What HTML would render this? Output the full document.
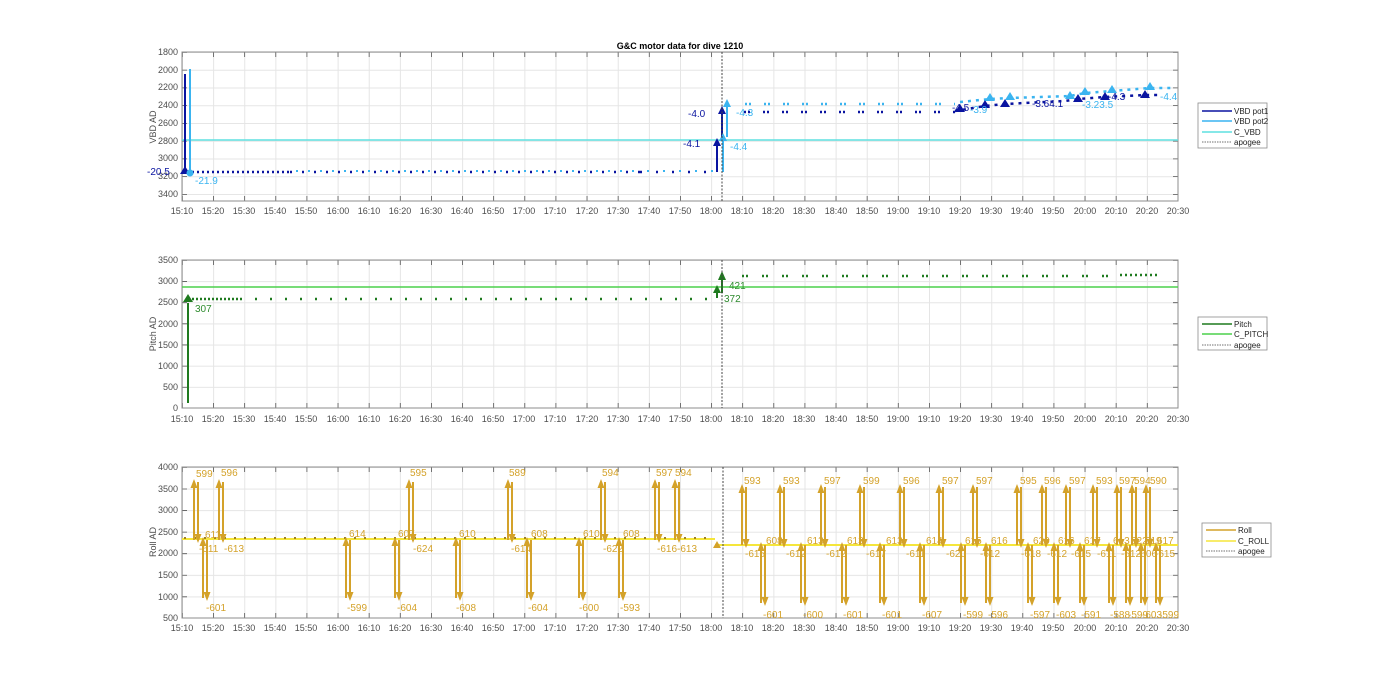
<!DOCTYPE html>
<html><head><meta charset="utf-8"><style>
html,body{margin:0;padding:0;background:#fff}
svg{display:block;font-family:"Liberation Sans",Arial,sans-serif}
.t{font-size:9px;fill:#4d4d4d}
.ty{font-size:9px;fill:#4d4d4d;text-anchor:end}
.tx{font-size:9px;fill:#4d4d4d;text-anchor:middle}
.r{font-size:10px;fill:#d4a22a}
.lg{font-size:8px;fill:#222}
</style></head><body>
<svg width="1400" height="693" viewBox="0 0 1400 693" xmlns="http://www.w3.org/2000/svg">
<defs>
<pattern id="gx" patternUnits="userSpaceOnUse" x="182" y="0" width="31.125" height="10"><line x1="0.5" y1="0" x2="0.5" y2="10" stroke="#e5e5e5" stroke-width="1"/></pattern>
<pattern id="gy1" patternUnits="userSpaceOnUse" x="0" y="52" width="10" height="17.75"><line x1="0" y1="0.5" x2="10" y2="0.5" stroke="#e5e5e5" stroke-width="1"/></pattern>
<pattern id="gy2" patternUnits="userSpaceOnUse" x="0" y="260" width="10" height="21.14"><line x1="0" y1="0.5" x2="10" y2="0.5" stroke="#e5e5e5" stroke-width="1"/></pattern>
<pattern id="gy3" patternUnits="userSpaceOnUse" x="0" y="467" width="10" height="21.57"><line x1="0" y1="0.5" x2="10" y2="0.5" stroke="#e5e5e5" stroke-width="1"/></pattern>
<g id="u" stroke="#d4a22a" stroke-width="2" fill="#d4a22a">
<line x1="0" y1="0" x2="0" y2="-53"/><polygon points="-3.5,-52 3.5,-52 0,-61" stroke="none"/>
<line x1="4" y1="-58" x2="4" y2="-5"/><polygon points="0.5,-6 7.5,-6 4,3" stroke="none"/>
</g>
<g id="d" stroke="#d4a22a" stroke-width="2" fill="#d4a22a">
<line x1="4" y1="0" x2="4" y2="53"/><polygon points="0.5,52 7.5,52 4,61" stroke="none"/>
<line x1="0" y1="58" x2="0" y2="5"/><polygon points="-3.5,6 3.5,6 0,-3" stroke="none"/>
</g>
<g id="ud" stroke="#d4a22a" stroke-width="2" fill="#d4a22a">
<line x1="0" y1="0" x2="0" y2="-53"/><polygon points="-3.5,-52 3.5,-52 0,-61" stroke="none"/>
<line x1="4" y1="-58" x2="4" y2="-5"/><polygon points="0.5,-6 7.5,-6 4,3" stroke="none"/>
</g>
</defs>

<text x="680" y="49" text-anchor="middle" style="font-size:9px;font-weight:bold;fill:#000">G&amp;C motor data for dive 1210</text>

<!-- ===== PLOT 1 ===== -->
<rect x="182" y="52" width="996" height="149" fill="url(#gx)"/>
<rect x="182" y="52" width="996" height="149" fill="url(#gy1)"/>
<line x1="182" y1="198.5" x2="1178" y2="198.5" stroke="#555" stroke-width="5" stroke-dasharray="0.8 30.325"/>
<line x1="182" y1="54.5" x2="1178" y2="54.5" stroke="#555" stroke-width="5" stroke-dasharray="0.8 30.325"/>
<line x1="1175.5" y1="52" x2="1175.5" y2="201" stroke="#555" stroke-width="5" stroke-dasharray="0.8 16.95"/>
<line x1="184.5" y1="52" x2="184.5" y2="201" stroke="#555" stroke-width="5" stroke-dasharray="0.8 16.95"/>
<rect x="182" y="52" width="996" height="149" fill="none" stroke="#8c8c8c" stroke-width="1"/>
<g class="ty">
<text x="178" y="55">1800</text><text x="178" y="73">2000</text><text x="178" y="90">2200</text><text x="178" y="108">2400</text><text x="178" y="126">2600</text><text x="178" y="144">2800</text><text x="178" y="161">3000</text><text x="178" y="179">3200</text><text x="178" y="197">3400</text>
</g>
<text transform="translate(156,127) rotate(-90)" text-anchor="middle" class="t">VBD AD</text>
<!-- C_VBD -->
<line x1="182" y1="140" x2="1178" y2="140" stroke="#5fe0e0" stroke-width="1.5"/>
<!-- dots before apogee -->
<line x1="192" y1="172" x2="290" y2="172" stroke="#0a14a0" stroke-width="2.5" stroke-dasharray="2 3"/>
<line x1="290" y1="172" x2="640" y2="172" stroke="#0a14a0" stroke-width="2.5" stroke-dasharray="2 10"/>
<line x1="296" y1="171" x2="640" y2="171" stroke="#3ab4f0" stroke-width="2" stroke-dasharray="2 10"/>
<line x1="640" y1="172" x2="715" y2="172" stroke="#0a14a0" stroke-width="2.5" stroke-dasharray="2 14"/>
<line x1="647" y1="171" x2="715" y2="171" stroke="#3ab4f0" stroke-width="2" stroke-dasharray="2 14"/>
<!-- initial arrows -->
<line x1="185" y1="172" x2="185" y2="74" stroke="#0a14a0" stroke-width="2"/>
<line x1="190" y1="172" x2="190" y2="69" stroke="#3ab4f0" stroke-width="2"/>
<polygon points="180,174 190,174 185,166" fill="#0a14a0"/>
<circle cx="190" cy="173" r="3.5" fill="#3ab4f0"/>
<text x="147" y="175" style="font-size:10px;fill:#0a14a0">-20.5</text>
<text x="195" y="184" style="font-size:10px;fill:#3ab4f0">-21.9</text>
<!-- apogee arrows -->
<line x1="717" y1="172" x2="717" y2="144" stroke="#0a14a0" stroke-width="2"/><polygon points="713,146 721,146 717,138" fill="#0a14a0"/>
<line x1="722" y1="137" x2="722" y2="112" stroke="#0a14a0" stroke-width="2"/><polygon points="718,114 726,114 722,106" fill="#0a14a0"/>
<line x1="723" y1="172" x2="723" y2="140" stroke="#3ab4f0" stroke-width="2"/><polygon points="719,141 727,141 723,133" fill="#3ab4f0"/>
<line x1="727" y1="137" x2="727" y2="106" stroke="#3ab4f0" stroke-width="2"/><polygon points="723,107 731,107 727,99" fill="#3ab4f0"/>
<text x="683" y="147" style="font-size:10px;fill:#0a14a0">-4.1</text>
<text x="688" y="117" style="font-size:10px;fill:#0a14a0">-4.0</text>
<text x="730" y="150" style="font-size:10px;fill:#3ab4f0">-4.4</text>
<text x="736" y="116" style="font-size:10px;fill:#3ab4f0">-4.3</text>
<!-- after apogee dots -->
<line x1="745" y1="104" x2="955" y2="104" stroke="#3ab4f0" stroke-width="2.5" stroke-dasharray="2 2 2 13"/>
<line x1="744" y1="112" x2="955" y2="112" stroke="#0a14a0" stroke-width="2.5" stroke-dasharray="2 2 2 13"/>
<polyline points="955,111 985,106 1005,104 1065,101 1078,99 1105,97 1145,95 1160,95" fill="none" stroke="#0a14a0" stroke-width="2.5" stroke-dasharray="3 5"/>
<polyline points="960,102 990,99 1010,98 1070,96 1085,93 1112,91 1150,88 1175,88" fill="none" stroke="#3ab4f0" stroke-width="2.5" stroke-dasharray="3 5"/>
<g fill="#0a14a0"><polygon points="955,112 965,112 960,104"/><polygon points="980,108 990,108 985,100"/><polygon points="1000,107 1010,107 1005,99"/><polygon points="1073,102 1083,102 1078,94"/><polygon points="1100,100 1110,100 1105,92"/><polygon points="1140,98 1150,98 1145,90"/></g>
<g fill="#3ab4f0"><polygon points="985,101 995,101 990,93"/><polygon points="1005,100 1015,100 1010,92"/><polygon points="1065,99 1075,99 1070,91"/><polygon points="1080,95 1090,95 1085,87"/><polygon points="1107,93 1117,93 1112,85"/><polygon points="1145,90 1155,90 1150,82"/></g>
<text x="952" y="111" style="font-size:10px;fill:#0a14a0">-4.5</text>
<text x="1032" y="107" style="font-size:10px;fill:#0a14a0">-3.64.1</text>
<text x="1108" y="100" style="font-size:10px;fill:#0a14a0">-4.3</text>
<text x="970" y="113" style="font-size:10px;fill:#3ab4f0">-3.9</text>
<text x="1082" y="108" style="font-size:10px;fill:#3ab4f0">-3.23.5</text>
<text x="1160" y="100" style="font-size:10px;fill:#3ab4f0">-4.4</text>
<line x1="722" y1="52" x2="722" y2="201" stroke="#444" stroke-width="1" stroke-dasharray="2 1.5"/>
<g class="tx">
<text x="182" y="214">15:10</text><text x="213" y="214">15:20</text><text x="244" y="214">15:30</text><text x="275" y="214">15:40</text><text x="306" y="214">15:50</text><text x="338" y="214">16:00</text><text x="369" y="214">16:10</text><text x="400" y="214">16:20</text><text x="431" y="214">16:30</text><text x="462" y="214">16:40</text><text x="493" y="214">16:50</text><text x="524" y="214">17:00</text><text x="555" y="214">17:10</text><text x="587" y="214">17:20</text><text x="618" y="214">17:30</text><text x="649" y="214">17:40</text><text x="680" y="214">17:50</text><text x="711" y="214">18:00</text><text x="742" y="214">18:10</text><text x="773" y="214">18:20</text><text x="804" y="214">18:30</text><text x="836" y="214">18:40</text><text x="867" y="214">18:50</text><text x="898" y="214">19:00</text><text x="929" y="214">19:10</text><text x="960" y="214">19:20</text><text x="991" y="214">19:30</text><text x="1022" y="214">19:40</text><text x="1053" y="214">19:50</text><text x="1085" y="214">20:00</text><text x="1116" y="214">20:10</text><text x="1147" y="214">20:20</text><text x="1178" y="214">20:30</text>
</g>
<!-- legend 1 -->
<rect x="1198" y="103" width="69" height="45" fill="#fff" stroke="#8c8c8c" stroke-width="0.8"/>
<line x1="1202" y1="111" x2="1232" y2="111" stroke="#0a14a0" stroke-width="1.5"/><text x="1234" y="114" class="lg">VBD pot1</text>
<line x1="1202" y1="121" x2="1232" y2="121" stroke="#3ab4f0" stroke-width="1.5"/><text x="1234" y="124" class="lg">VBD pot2</text>
<line x1="1202" y1="132" x2="1232" y2="132" stroke="#5fe0e0" stroke-width="1.5"/><text x="1234" y="135" class="lg">C_VBD</text>
<line x1="1202" y1="142" x2="1232" y2="142" stroke="#444" stroke-width="0.8" stroke-dasharray="1.5 1"/><text x="1234" y="145" class="lg">apogee</text>

<!-- ===== PLOT 2 ===== -->
<rect x="182" y="260" width="996" height="148" fill="url(#gx)"/>
<rect x="182" y="260" width="996" height="148" fill="url(#gy2)"/>
<line x1="182" y1="405.5" x2="1178" y2="405.5" stroke="#555" stroke-width="5" stroke-dasharray="0.8 30.325"/>
<line x1="182" y1="262.5" x2="1178" y2="262.5" stroke="#555" stroke-width="5" stroke-dasharray="0.8 30.325"/>
<line x1="1175.5" y1="260" x2="1175.5" y2="408" stroke="#555" stroke-width="5" stroke-dasharray="0.8 20.34"/>
<line x1="184.5" y1="260" x2="184.5" y2="408" stroke="#555" stroke-width="5" stroke-dasharray="0.8 20.34"/>
<rect x="182" y="260" width="996" height="148" fill="none" stroke="#8c8c8c" stroke-width="1"/>
<g class="ty">
<text x="178" y="263">3500</text><text x="178" y="284">3000</text><text x="178" y="305">2500</text><text x="178" y="327">2000</text><text x="178" y="348">1500</text><text x="178" y="369">1000</text><text x="178" y="390">500</text><text x="178" y="411">0</text>
</g>
<text transform="translate(156,334) rotate(-90)" text-anchor="middle" class="t">Pitch AD</text>
<line x1="182" y1="287" x2="1178" y2="287" stroke="#4cd04c" stroke-width="1.5"/>
<line x1="192" y1="299" x2="240" y2="299" stroke="#1f7a1f" stroke-width="2.5" stroke-dasharray="2 2"/>
<line x1="240" y1="299" x2="715" y2="299" stroke="#1f7a1f" stroke-width="2.5" stroke-dasharray="2 13"/>
<line x1="742" y1="276" x2="1120" y2="276" stroke="#1f7a1f" stroke-width="2.5" stroke-dasharray="2 2 2 14"/>
<line x1="1120" y1="275" x2="1160" y2="275" stroke="#1f7a1f" stroke-width="2.5" stroke-dasharray="2 3"/>
<line x1="188" y1="403" x2="188" y2="303" stroke="#1f7a1f" stroke-width="2"/><polygon points="183,302 193,302 188,294" fill="#1f7a1f"/>
<text x="195" y="312" style="font-size:10px;fill:#2e8b2e">307</text>
<line x1="717" y1="298" x2="717" y2="292" stroke="#1f7a1f" stroke-width="2"/><polygon points="713,293 721,293 717,285" fill="#1f7a1f"/>
<line x1="722" y1="293" x2="722" y2="279" stroke="#1f7a1f" stroke-width="2"/><polygon points="718,280 726,280 722,271" fill="#1f7a1f"/>
<text x="729" y="289" style="font-size:10px;fill:#2e8b2e">421</text>
<text x="724" y="302" style="font-size:10px;fill:#2e8b2e">372</text>
<line x1="722" y1="260" x2="722" y2="408" stroke="#444" stroke-width="1" stroke-dasharray="2 1.5"/>
<g class="tx">
<text x="182" y="422">15:10</text><text x="213" y="422">15:20</text><text x="244" y="422">15:30</text><text x="275" y="422">15:40</text><text x="306" y="422">15:50</text><text x="338" y="422">16:00</text><text x="369" y="422">16:10</text><text x="400" y="422">16:20</text><text x="431" y="422">16:30</text><text x="462" y="422">16:40</text><text x="493" y="422">16:50</text><text x="524" y="422">17:00</text><text x="555" y="422">17:10</text><text x="587" y="422">17:20</text><text x="618" y="422">17:30</text><text x="649" y="422">17:40</text><text x="680" y="422">17:50</text><text x="711" y="422">18:00</text><text x="742" y="422">18:10</text><text x="773" y="422">18:20</text><text x="804" y="422">18:30</text><text x="836" y="422">18:40</text><text x="867" y="422">18:50</text><text x="898" y="422">19:00</text><text x="929" y="422">19:10</text><text x="960" y="422">19:20</text><text x="991" y="422">19:30</text><text x="1022" y="422">19:40</text><text x="1053" y="422">19:50</text><text x="1085" y="422">20:00</text><text x="1116" y="422">20:10</text><text x="1147" y="422">20:20</text><text x="1178" y="422">20:30</text>
</g>
<rect x="1198" y="317" width="69" height="33" fill="#fff" stroke="#8c8c8c" stroke-width="0.8"/>
<line x1="1202" y1="324" x2="1232" y2="324" stroke="#1f7a1f" stroke-width="1.5"/><text x="1234" y="327" class="lg">Pitch</text>
<line x1="1202" y1="334" x2="1232" y2="334" stroke="#4cd04c" stroke-width="1.5"/><text x="1234" y="337" class="lg">C_PITCH</text>
<line x1="1202" y1="345" x2="1232" y2="345" stroke="#444" stroke-width="0.8" stroke-dasharray="1.5 1"/><text x="1234" y="348" class="lg">apogee</text>

<!-- ===== PLOT 3 ===== -->
<rect x="182" y="467" width="996" height="151" fill="url(#gx)"/>
<rect x="182" y="467" width="996" height="151" fill="url(#gy3)"/>
<line x1="182" y1="615.5" x2="1178" y2="615.5" stroke="#555" stroke-width="5" stroke-dasharray="0.8 30.325"/>
<line x1="182" y1="469.5" x2="1178" y2="469.5" stroke="#555" stroke-width="5" stroke-dasharray="0.8 30.325"/>
<line x1="1175.5" y1="467" x2="1175.5" y2="618" stroke="#555" stroke-width="5" stroke-dasharray="0.8 20.77"/>
<line x1="184.5" y1="467" x2="184.5" y2="618" stroke="#555" stroke-width="5" stroke-dasharray="0.8 20.77"/>
<rect x="182" y="467" width="996" height="151" fill="none" stroke="#8c8c8c" stroke-width="1"/>
<g class="ty">
<text x="178" y="470">4000</text><text x="178" y="492">3500</text><text x="178" y="513">3000</text><text x="178" y="535">2500</text><text x="178" y="556">2000</text><text x="178" y="578">1500</text><text x="178" y="600">1000</text><text x="178" y="621">500</text>
</g>
<text transform="translate(156,542) rotate(-90)" text-anchor="middle" class="t">Roll AD</text>
<line x1="182" y1="539" x2="715" y2="539" stroke="#f5e63a" stroke-width="2"/>
<line x1="715" y1="545" x2="1178" y2="545" stroke="#f5e63a" stroke-width="2"/>
<line x1="184" y1="538" x2="712" y2="538" stroke="#a08020" stroke-width="2" stroke-dasharray="2 8"/>
<polygon points="713,548 721,548 717,541" fill="#d4a22a"/>
<!-- before apogee arrows -->
<use href="#u" x="194" y="540"/><use href="#d" x="203" y="540"/><use href="#u" x="219" y="540"/>
<use href="#d" x="346" y="540"/><use href="#d" x="395" y="540"/><use href="#u" x="409" y="540"/>
<use href="#d" x="456" y="540"/><use href="#u" x="508" y="540"/><use href="#d" x="527" y="540"/>
<use href="#d" x="579" y="540"/><use href="#u" x="601" y="540"/><use href="#d" x="619" y="540"/>
<use href="#u" x="655" y="540"/><use href="#u" x="675" y="540"/>
<!-- after apogee -->
<use href="#u" x="742" y="545"/><use href="#d" x="761" y="545"/><use href="#u" x="780" y="545"/><use href="#d" x="801" y="545"/>
<use href="#u" x="821" y="545"/><use href="#d" x="842" y="545"/><use href="#u" x="860" y="545"/><use href="#d" x="880" y="545"/>
<use href="#u" x="900" y="545"/><use href="#d" x="920" y="545"/><use href="#u" x="939" y="545"/><use href="#d" x="961" y="545"/>
<use href="#u" x="973" y="545"/><use href="#d" x="986" y="545"/><use href="#u" x="1017" y="545"/><use href="#d" x="1028" y="545"/>
<use href="#u" x="1042" y="545"/><use href="#d" x="1054" y="545"/><use href="#u" x="1066" y="545"/><use href="#d" x="1080" y="545"/>
<use href="#u" x="1093" y="545"/><use href="#d" x="1109" y="545"/><use href="#u" x="1117" y="545"/><use href="#d" x="1126" y="545"/>
<use href="#u" x="1132" y="545"/><use href="#d" x="1141" y="545"/><use href="#u" x="1146" y="545"/><use href="#d" x="1156" y="545"/>
<line x1="723" y1="467" x2="723" y2="618" stroke="#444" stroke-width="1" stroke-dasharray="2 1.5"/>
<g class="r">
<text x="196" y="477">599</text><text x="199" y="552">-611</text><text x="205" y="538">611</text><text x="206" y="611">-601</text>
<text x="221" y="476">596</text><text x="224" y="552">-613</text>
<text x="349" y="537">614</text><text x="347" y="611">-599</text>
<text x="398" y="537">607</text><text x="397" y="611">-604</text><text x="410" y="476">595</text><text x="413" y="552">-624</text>
<text x="459" y="537">610</text><text x="456" y="611">-608</text>
<text x="509" y="476">589</text><text x="511" y="552">-614</text>
<text x="531" y="537">608</text><text x="528" y="611">-604</text>
<text x="583" y="537">610</text><text x="579" y="611">-600</text>
<text x="602" y="476">594</text><text x="603" y="552">-622</text>
<text x="623" y="537">608</text><text x="620" y="611">-593</text>
<text x="656" y="476">597</text><text x="657" y="552">-616</text><text x="675" y="476">594</text><text x="677" y="552">-613</text>
<text x="744" y="484">593</text><text x="745" y="557">-615</text><text x="766" y="544">608</text><text x="763" y="618">-601</text>
<text x="783" y="484">593</text><text x="786" y="557">-612</text><text x="807" y="544">613</text><text x="803" y="618">-600</text>
<text x="824" y="484">597</text><text x="826" y="557">-612</text><text x="847" y="544">613</text><text x="843" y="618">-601</text>
<text x="863" y="484">599</text><text x="866" y="557">-617</text><text x="886" y="544">613</text><text x="882" y="618">-601</text>
<text x="903" y="484">596</text><text x="906" y="557">-611</text><text x="926" y="544">614</text><text x="922" y="618">-607</text>
<text x="942" y="484">597</text><text x="946" y="557">-620</text><text x="965" y="544">615</text><text x="963" y="618">-599</text>
<text x="976" y="484">597</text><text x="980" y="557">-612</text><text x="991" y="544">616</text><text x="988" y="618">-596</text>
<text x="1020" y="484">595</text><text x="1021" y="557">-618</text><text x="1033" y="544">620</text><text x="1030" y="618">-597</text>
<text x="1044" y="484">596</text><text x="1047" y="557">-612</text><text x="1058" y="544">616</text><text x="1056" y="618">-603</text>
<text x="1069" y="484">597</text><text x="1071" y="557">-615</text><text x="1084" y="544">617</text><text x="1081" y="618">-591</text>
<text x="1096" y="484">593</text><text x="1097" y="557">-611</text><text x="1113" y="544">613</text><text x="1110" y="618">-588</text>
<text x="1119" y="484">597</text><text x="1121" y="557">-612</text><text x="1131" y="544">622</text><text x="1128" y="618">-599</text>
<text x="1134" y="484">594</text><text x="1145" y="544">619</text><text x="1137" y="557">-606</text><text x="1142" y="618">-603</text>
<text x="1150" y="484">590</text><text x="1157" y="544">617</text><text x="1155" y="557">-615</text><text x="1159" y="618">-599</text>
</g>
<g class="tx">
<text x="182" y="631">15:10</text><text x="213" y="631">15:20</text><text x="244" y="631">15:30</text><text x="275" y="631">15:40</text><text x="306" y="631">15:50</text><text x="338" y="631">16:00</text><text x="369" y="631">16:10</text><text x="400" y="631">16:20</text><text x="431" y="631">16:30</text><text x="462" y="631">16:40</text><text x="493" y="631">16:50</text><text x="524" y="631">17:00</text><text x="555" y="631">17:10</text><text x="587" y="631">17:20</text><text x="618" y="631">17:30</text><text x="649" y="631">17:40</text><text x="680" y="631">17:50</text><text x="711" y="631">18:00</text><text x="742" y="631">18:10</text><text x="773" y="631">18:20</text><text x="804" y="631">18:30</text><text x="836" y="631">18:40</text><text x="867" y="631">18:50</text><text x="898" y="631">19:00</text><text x="929" y="631">19:10</text><text x="960" y="631">19:20</text><text x="991" y="631">19:30</text><text x="1022" y="631">19:40</text><text x="1053" y="631">19:50</text><text x="1085" y="631">20:00</text><text x="1116" y="631">20:10</text><text x="1147" y="631">20:20</text><text x="1178" y="631">20:30</text>
</g>
<rect x="1202" y="523" width="69" height="34" fill="#fff" stroke="#8c8c8c" stroke-width="0.8"/>
<line x1="1206" y1="530" x2="1236" y2="530" stroke="#d4a22a" stroke-width="1.5"/><text x="1238" y="533" class="lg">Roll</text>
<line x1="1206" y1="541" x2="1236" y2="541" stroke="#f5e63a" stroke-width="1.5"/><text x="1238" y="544" class="lg">C_ROLL</text>
<line x1="1206" y1="551" x2="1236" y2="551" stroke="#444" stroke-width="0.8" stroke-dasharray="1.5 1"/><text x="1238" y="554" class="lg">apogee</text>
</svg>
</body></html>
